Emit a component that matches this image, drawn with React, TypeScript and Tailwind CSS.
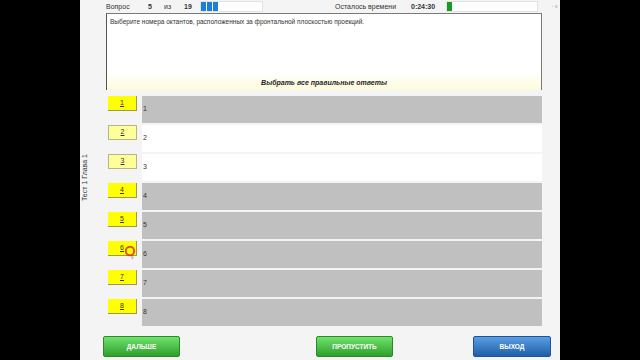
import React from 'react'

const ROWS = [
  { n: 1, gray: true, pale: false },
  { n: 2, gray: false, pale: true },
  { n: 3, gray: false, pale: true },
  { n: 4, gray: true, pale: false },
  { n: 5, gray: true, pale: false },
  { n: 6, gray: true, pale: false },
  { n: 7, gray: true, pale: false },
  { n: 8, gray: true, pale: false },
]

function Bar({ width, blocks, color }: { width: string; blocks: number; color: string }) {
  return (
    <div className={`${width} shrink-0 h-[11px] bg-white border border-[#e2e2e2] flex gap-[1px] p-0`}>
      {Array.from({ length: blocks }).map((_, i) => (
        <div key={i} className={`w-[5px] h-full ${color}`} />
      ))}
    </div>
  )
}

export default function App(): React.ReactElement {
  return (
    <div
      className="w-[640px] h-[360px] flex bg-black overflow-hidden text-[#333]"
      style={{ fontFamily: '"Liberation Sans", Arial, sans-serif' }}
    >
      <div className="w-[80px] shrink-0 bg-black" />

      {/* Test window */}
      <div className="relative w-[480px] shrink-0 bg-[#f4f4f4] flex flex-col">
        {/* Header */}
        <div className="h-[13px] flex items-center text-[7px] leading-none">
          <div className="w-[26px] shrink-0" />
          <span className="w-[42px] shrink-0">Вопрос</span>
          <span className="w-[16px] shrink-0 font-bold">5</span>
          <span className="w-[20px] shrink-0">из</span>
          <span className="w-[16px] shrink-0 font-bold">19</span>
          <Bar width="w-[63px]" blocks={3} color="bg-[#1c7fd9]" />
          <div className="w-[72px] shrink-0" />
          <span className="w-[76px] shrink-0">Осталось времени</span>
          <span className="w-[35px] shrink-0 font-bold">0:24:30</span>
          <Bar width="w-[92px]" blocks={1} color="bg-[#1a9a22]" />
          <div className="w-[14px] shrink-0" />
          <span className="text-[#999] text-[5px] leading-none whitespace-nowrap">-&nbsp;x</span>
        </div>

        <div className="flex flex-1">
          {/* Vertical caption */}
          <div className="w-[26px] flex flex-col items-start justify-center pl-[1px] pt-[6px]">
            <span className="text-[7px] leading-none [writing-mode:vertical-rl] rotate-180">
              Тест 1 Глава 1
            </span>
          </div>

          <div className="w-[436px] flex flex-col">
            {/* Question */}
            <div className="h-[77px] flex flex-col bg-white border-l border-r border-t border-[#7a7a7a] border-l-[#555]">
              <p className="flex-1 pl-[3px] pt-[4px] text-[6.5px] leading-tight">
                Выберите номера октантов, расположенных за фронтальной плоскостью проекций.
              </p>
              <div className="h-[14px] flex items-center justify-center bg-gradient-to-b from-[#fffff4] to-[#fdfbdc] text-[7px] font-bold italic text-[#222]">
                Выбрать все правильные ответы
              </div>
            </div>

            {/* Answers */}
            <div className="mt-[6px] flex flex-col gap-[2px]">
              {ROWS.map((r) => (
                <div key={r.n} className="h-[27px] flex">
                  <div className="w-[36px] pl-[2px]">
                    <div
                      className={`w-[29px] h-[15px] flex items-center justify-center text-[7px] underline border-r border-b ${
                        r.pale
                          ? 'bg-[#ffff9a] border-[#b5b58a] border-l border-t'
                          : 'bg-[#ffff00] border-[#9a9a50]'
                      }`}
                    >
                      {r.n}
                    </div>
                  </div>
                  <div
                    className={`flex-1 pl-[1px] pt-[8px] text-[7px] ${
                      r.gray ? 'bg-[#c0c0c0]' : 'bg-white'
                    }`}
                  >
                    {r.n}
                  </div>
                </div>
              ))}
            </div>
          </div>
        </div>

        {/* Footer buttons */}
        <div className="h-[24px] flex items-start">
          <div className="w-[23px]" />
          <button className="w-[77px] h-[21px] rounded-[2px] bg-gradient-to-b from-[#6ee36a] to-[#2f9f2c] border border-[#2a8a28] text-white text-[6.5px] font-bold">
            ДАЛЬШЕ
          </button>
          <div className="w-[136px]" />
          <button className="w-[77px] h-[21px] rounded-[2px] bg-gradient-to-b from-[#6ee36a] to-[#2f9f2c] border border-[#2a8a28] text-white text-[6.5px] font-bold">
            ПРОПУСТИТЬ
          </button>
          <div className="w-[80px]" />
          <button className="w-[78px] h-[21px] rounded-[2px] bg-gradient-to-b from-[#5b9fe6] to-[#1f5ea8] border border-[#1d5496] text-white text-[6.5px] font-bold">
            ВЫХОД
          </button>
        </div>

        {/* Mouse cursor highlight */}
        <svg
          className="absolute left-[44px] top-[245px]"
          width="14"
          height="16"
          viewBox="0 0 14 16"
          aria-hidden="true"
        >
          <circle cx="6" cy="6" r="4.2" fill="none" stroke="#e0303a" strokeWidth="2" opacity="0.85" />
          <path d="M7 11 L8 15 L10 12 Z" fill="#9aa0a6" opacity="0.7" />
        </svg>
      </div>

      <div className="w-[80px] shrink-0 bg-black" />
    </div>
  )
}
